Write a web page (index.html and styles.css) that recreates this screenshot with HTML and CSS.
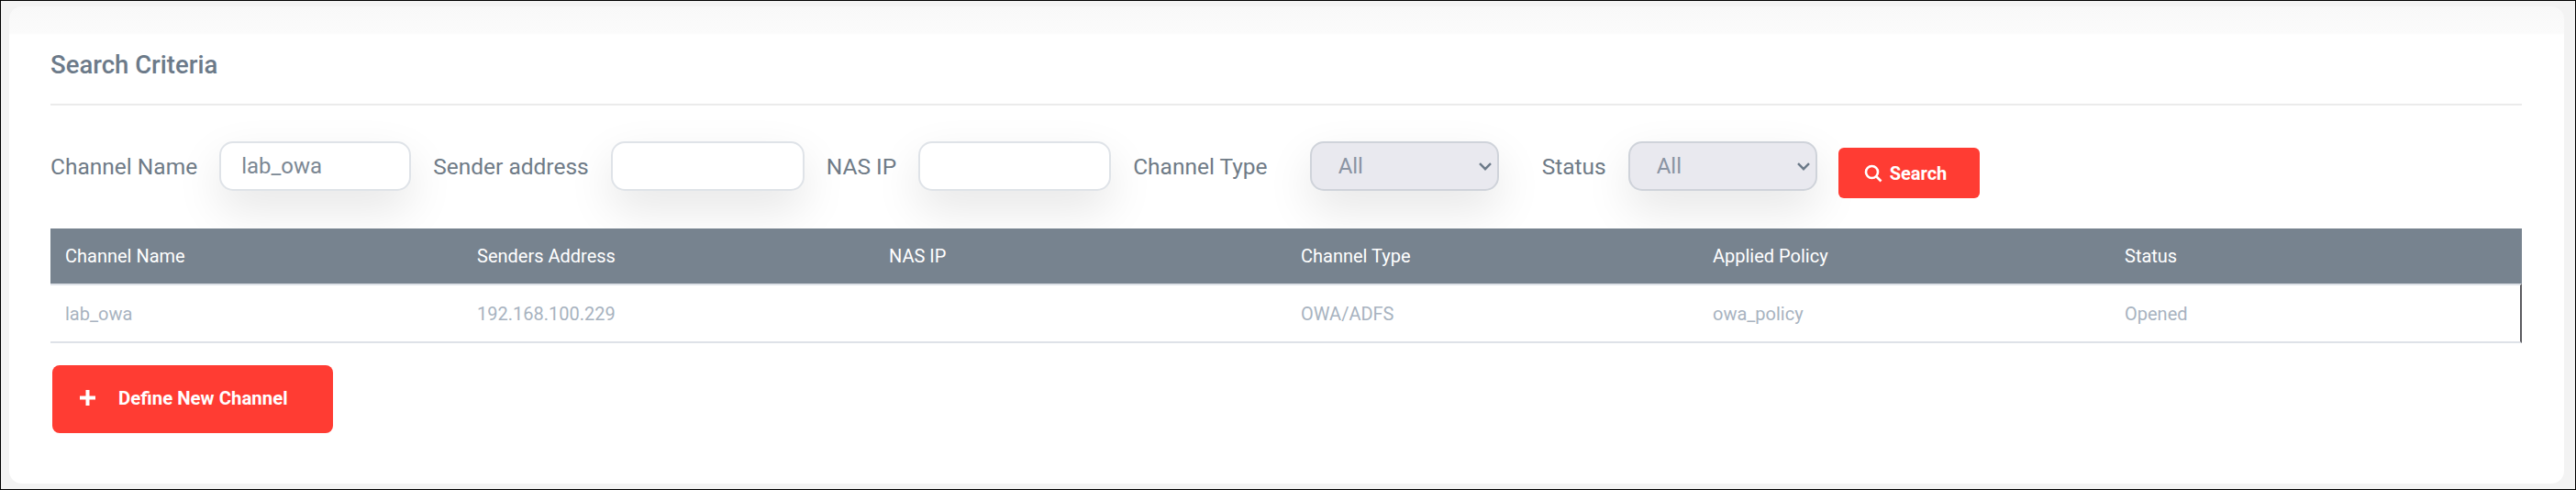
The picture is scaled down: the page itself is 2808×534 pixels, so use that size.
FILE: index.html
```html
<!DOCTYPE html>
<html lang="en">
<head>
<meta charset="utf-8">
<title>Search Criteria</title>
<link rel="stylesheet" href="styles.css">
</head>
<body>
<main class="card">
  <h2 class="title">Search Criteria</h2>
  <form class="filters">
    <label class="label" for="f-name">Channel Name</label>
    <input class="field field-first" id="f-name" type="text" value="lab_owa">
    <label class="label" for="f-sender">Sender address</label>
    <input class="field field-second" id="f-sender" type="text">
    <label class="label" for="f-nas">NAS IP</label>
    <input class="field" id="f-nas" type="text">
    <label class="label" for="f-type">Channel Type</label>
    <select class="field select select-type" id="f-type"><option>All</option></select>
    <label class="label label-status" for="f-status">Status</label>
    <select class="field select" id="f-status"><option>All</option></select>
    <button class="btn btn-search" type="button">
      <svg class="icon-search" viewBox="0 0 20 20" aria-hidden="true"><circle cx="8.5" cy="8.5" r="6.5"/><path d="M13.5 13.5L18.5 18.5"/></svg>
      Search
    </button>
  </form>
  <table class="grid">
    <thead>
      <tr><th>Channel Name</th><th>Senders Address</th><th>NAS IP</th><th>Channel Type</th><th>Applied Policy</th><th>Status</th></tr>
    </thead>
    <tbody>
      <tr><td>lab_owa</td><td>192.168.100.229</td><td></td><td>OWA/ADFS</td><td>owa_policy</td><td class="last">Opened</td></tr>
    </tbody>
  </table>
  <button class="btn btn-new" type="button">
    <svg class="icon-plus" viewBox="0 0 17 17" aria-hidden="true"><path d="M8.5 0V17M0 8.5H17"/></svg>
    Define New Channel
  </button>
</main>
</body>
</html>
```
FILE: styles.css
```css
* { box-sizing: border-box; }
html, body { margin: 0; height: 534px; overflow: hidden; }
body {
  width: 2808px;
  padding: 6px 12px 5px 9px;
  background: #f3f3f3;
  border: 1px solid #000;
  font-family: Roboto, "Liberation Sans", sans-serif;
}
.card {
  height: 520px;
  padding: 0 46px 0 45px;
  background: linear-gradient(#f8f8f8 0, #fbfbfb 29px, #fff 31px);
  border-radius: 14px;
  overflow: hidden;
}
.title {
  margin: 0;
  height: 108px;
  padding-top: 46px;
  font-size: 27.5px;
  line-height: 36px;
  font-weight: 500;
  color: #6c7a89;
  border-bottom: 2px solid #ebebeb;
}
.filters {
  display: flex;
  align-items: flex-start;
  gap: 24px;
  height: 134px;
  padding-top: 39px;
}
.label {
  font-size: 24.5px;
  line-height: 56px;
  color: #6f7b87;
  white-space: nowrap;
}
.field {
  width: 210px;
  height: 54px;
  padding: 0 22px;
  font: 400 24px Roboto, "Liberation Sans", sans-serif;
  color: #7c8894;
  background: #fff;
  border: 2px solid #dfe3e8;
  border-radius: 15px;
  box-shadow: 0 20px 50px rgba(0, 0, 0, .1);
  outline: none;
}
.field-first { width: 209px; }
.field-second { width: 211px; }
.select {
  appearance: none;
  width: 206px;
  padding: 0 30px 0 29px;
  color: #8a94a3;
  background: #e9e9ef url("data:image/svg+xml,%3Csvg xmlns='http://www.w3.org/2000/svg' width='14' height='9' viewBox='0 0 14 9'%3E%3Cpath d='M1 1.2l6 6 6-6' fill='none' stroke='%236c7a89' stroke-width='2.4'/%3E%3C/svg%3E") no-repeat right 6px center;
  border-color: #cfd3da;
}
.select-type { margin-left: 22px; }
.label-status { margin-left: 23px; }
.btn {
  display: flex;
  align-items: center;
  color: #fff;
  background: #ff3c33;
  border: 0;
  border-radius: 6px;
  font: 700 20px Roboto, "Liberation Sans", sans-serif;
}
.btn-search {
  width: 154px;
  height: 55px;
  margin: 7px 0 0 -1px;
  padding: 0 0 0 28px;
  gap: 8px;
}
.icon-search { width: 20px; height: 20px; fill: none; stroke: #fff; stroke-width: 2.6; }
.grid {
  position: relative;
  width: 100%;
  table-layout: fixed;
  border-collapse: separate;
  border-spacing: 0;
  font-size: 20px;
}
.grid th {
  height: 60px;
  padding: 0 16px;
  text-align: left;
  font-weight: 400;
  color: #fff;
  background: #77838f;
}
.grid td {
  height: 65px;
  padding: 0 16px;
  color: #a8b3c0;
  background: #fff;
  border-top: 2px solid #dee2e8;
  border-bottom: 2px solid #dee2e8;
}
.grid td.last { border-right: 2px solid #5c5c60; }
.btn-new {
  width: 306px;
  height: 74px;
  margin: 24px 0 0 2px;
  padding: 0 0 3px 30px;
  gap: 25px;
  border-radius: 8px;
  font-size: 20.4px;
}
.icon-plus { width: 17px; height: 17px; fill: none; stroke: #fff; stroke-width: 4; }
```
